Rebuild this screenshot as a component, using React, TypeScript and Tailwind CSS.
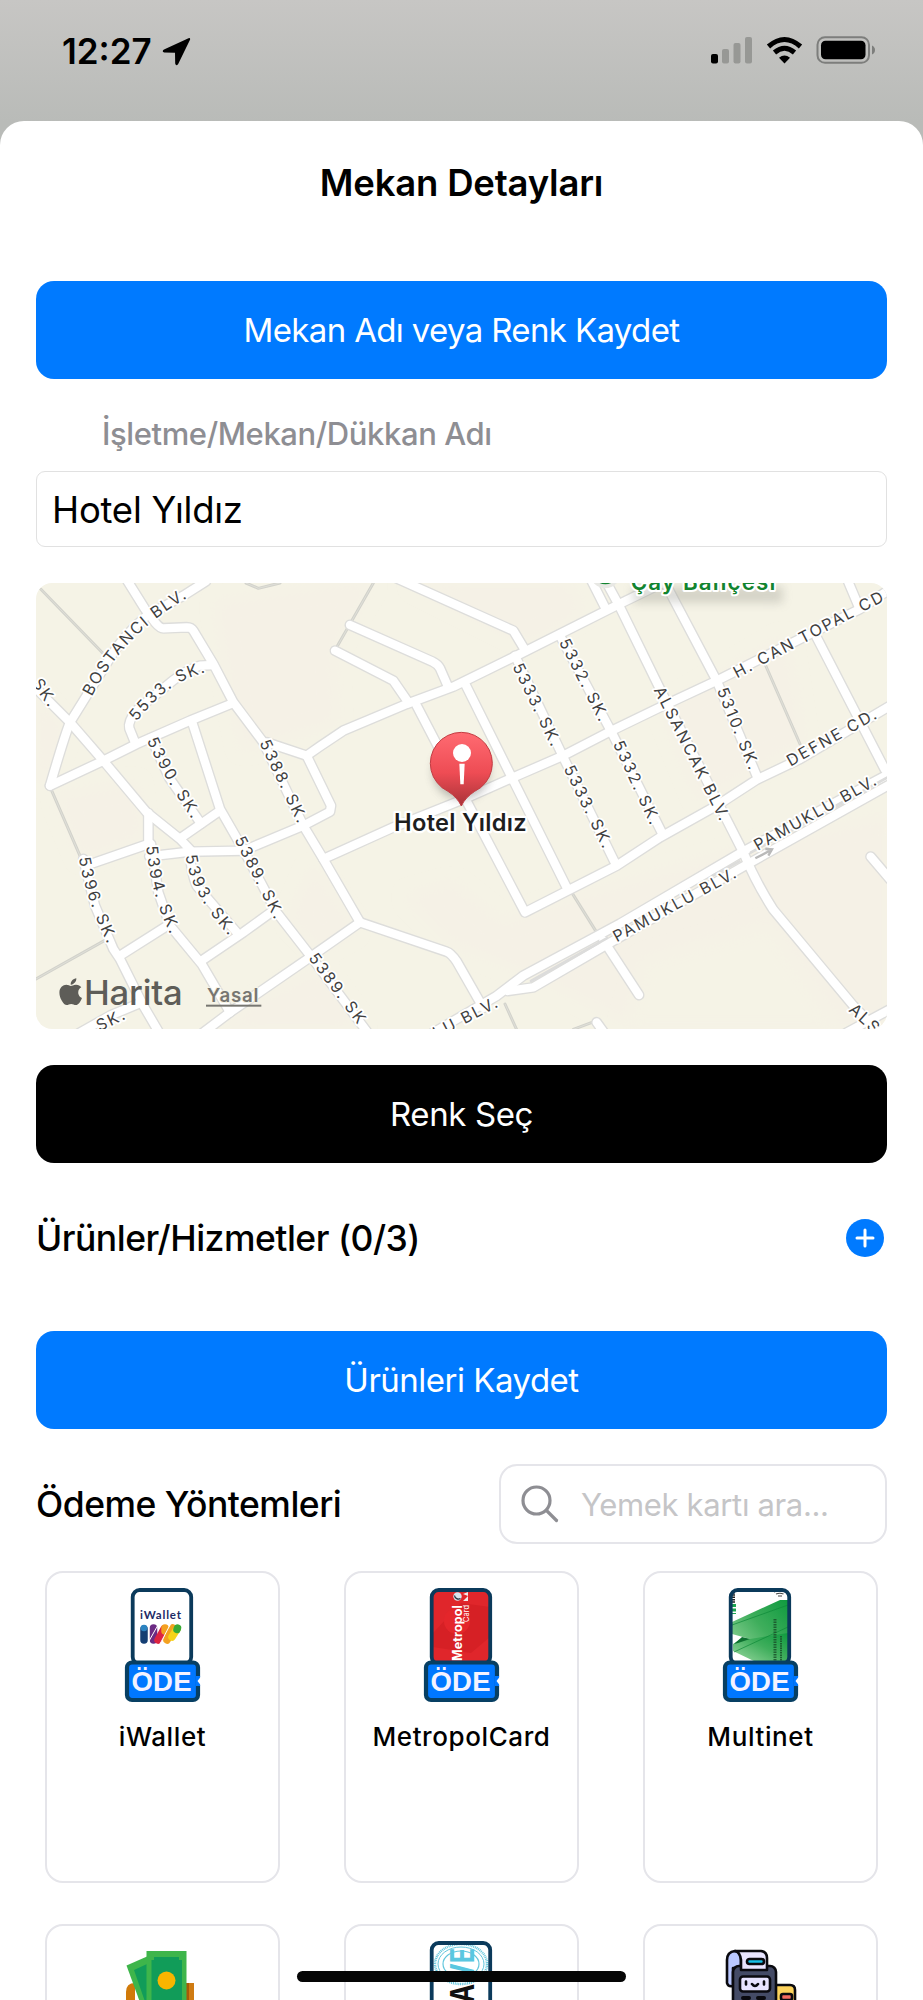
import { type FC, type ReactNode } from 'react';
import { FaApple } from 'react-icons/fa';

// street geometry, in thirds of a pixel from the map's top left corner
const roads = [
  'M272 -10L327 78L357 118Q372 136 382 136L452 133Q466 133 472 143L532 243L592 358L682 478L802 728L862 828L972 1018',
  'M972 1018L1232 1106Q1245 1110 1262 1135L1342 1275',
  'M972 1018L822 1123L582 1288L500 1350',
  'M510 -5L442 38L330 100Q260 160 225 220L102 418Q85 460 42 608',
  'M42 608L202 533L302 483L462 413L592 360',
  'M-18 298L102 418L202 533L332 688L432 768L472 810',
  'M297 478L280 436Q275 415 302 382L412 292Q450 262 492 248L532 246',
  'M345 465L400 585L495 722',
  'M437 763L552 683',
  'M467 413L552 678L622 800L722 988L827 1123L992 1345',
  'M150 848L337 783L337 690',
  'M340 820L462 806L622 803L802 728L882 686L885 668L812 518',
  'M692 478L812 518L852 490L922 443L1112 363L1252 311L1452 213L1752 62L1900 -10',
  'M862 828L1072 733L1292 645L1432 583L1582 518L1727 443L1882 368L2042 293L2292 168L2472 78L2560 20',
  'M142 828L177 968L232 1098L252 1128L322 1268L370 1350',
  'M252 1118L402 1023',
  'M345 783L367 928L402 1028L497 1143L582 1288',
  'M497 1133L622 1048L712 983',
  'M462 808Q465 870 482 908L602 1048',
  'M130 1350L222 1298L317 1258',
  'M1080 -15L1432 143L1468 203',
  'M942 126L1190 236Q1206 244 1212 256L1237 313',
  'M897 203L1072 293L1117 358',
  'M1142 368L1292 655L1467 988L1742 848L1872 763L2042 668L2162 590L2292 528L2560 370',
  'M1290 308L1592 913',
  'M1437 218L1582 523L1735 835',
  'M1572 158L1727 448L1877 748',
  'M1665 -10L1707 73',
  'M1707 -10L1752 73L1872 318L2122 808Q2160 900 2212 980L2452 1268L2540 1360',
  'M1882 -10L2042 293L2162 578',
  'M2432 -15L2467 68',
  'M2342 163L2547 560',
  'M1190 1350L1380 1240L1462 1178L1752 1022L2122 805L2560 572',
  'M1415 1224L1492 1213L1712 1085L2132 845L2560 605',
  'M1702 1072L1809 1236',
  'M2504 821L2580 910',
  'M2430 1350L2560 1280',
  'M1682 1318L1705 1350',
];

const paths =
  'M14 18L200 210M48 625L137 830M0 1188L205 1073M630 0L667 16L732 0M1012 0L902 193M1607 928L1682 1048M1407 1263L1442 1340M1612 1339L1682 1313M2187 243L2292 483';

const streets = [
  { name: 'BOSTANCI BLV.', d: 'M154 334Q222 200 335 108Q382 68 492 4' },
  { name: '5533. SK.', d: 'M290 407Q355 325 418 289Q467 259 560 240' },
  { name: '5390. SK.', d: 'M346 466Q385 560 510 745' },
  { name: '5388. SK.', d: 'M683 473L820 760' },
  { name: '5389. SK.', d: 'M608 763L750 1045' },
  { name: '5394. SK.', d: 'M346 788Q355 935 440 1095' },
  { name: '5393. SK.', d: 'M464 815Q475 930 615 1075' },
  { name: '5396. SK.', d: 'M143 822Q170 970 250 1120' },
  { name: 'SK.', d: 'M0 292L80 408' },
  { name: 'SK.', d: 'M184 1332L300 1277' },
  { name: '5389. SK', d: 'M828 1116L1015 1368' },
  { name: 'LU BLV.', d: 'M1195 1354L1450 1222' },
  { name: '5333. SK.', d: 'M1442 244L1586 540' },
  { name: '5333. SK.', d: 'M1596 550L1740 845' },
  { name: '5332. SK.', d: 'M1582 170L1730 464' },
  { name: '5332. SK.', d: 'M1744 476L1880 772' },
  { name: 'ALSANCAK BLV.', d: 'M1866 314L2094 765' },
  { name: '5310. SK.', d: 'M2056 316L2177 615' },
  { name: 'H. CAN TOPAL CD', d: 'M2096 273L2600 7' },
  { name: 'DEFNE CD.', d: 'M2256 538L2570 363' },
  { name: 'PAMUKLU BLV.', d: 'M1735 1065L2150 840' },
  { name: 'PAMUKLU BLV.', d: 'M2158 791L2580 556' },
  { name: 'ALS', d: 'M2446 1272L2560 1376' },
];

const StatusBar: FC = () => (
  <div className="flex h-[121px] items-start justify-between bg-linear-to-b from-[#c7c6c4] to-[#b9bbb8] pt-[30px] pr-[47px] pl-[62px]">
    <div className="flex items-center gap-[10px]">
      <span className="text-[35px] leading-[42px] font-semibold">12:27</span>
      <svg width="29" height="29" viewBox="0 0 29 29">
        <path d="M26.5 1.2L2 12.6Q-.6 14.5 2.2 15.6L13 15.8L13.2 26.5Q14 29.6 16.2 27L28 2.8Q28.6.5 26.5 1.2Z" />
      </svg>
    </div>
    <svg width="166" height="30" viewBox="0 0 166 30" className="mt-[5px]">
      <rect x="1" y="19" width="7" height="9.5" rx="2" />
      <g fill="#979895">
        <rect x="12" y="14" width="7" height="14.5" rx="2" />
        <rect x="23.5" y="8" width="7" height="20.5" rx="2" />
        <rect x="35" y="2" width="7" height="26.5" rx="2" />
      </g>
      <g fill="none" stroke="#000" strokeWidth="5">
        <path d="M58.5 11.5Q74.5 -2.5 90.5 11.5" />
        <path d="M64.5 17.5Q74.5 9 84.5 17.5" />
      </g>
      <path d="M69 22.8Q74.5 18.4 80 22.8L74.5 28.5Z" />
      <rect x="107.5" y="2.2" width="51.5" height="25.6" rx="7.5" fill="none" stroke="#7d7e7c" strokeWidth="2" />
      <rect x="111" y="5.8" width="44.5" height="18.5" rx="4.5" />
      <path d="M162 10.5Q165 12 165 15Q165 18 162 19.5Z" fill="#7d7e7c" />
    </svg>
  </div>
);

const Button: FC<{ className: string; children: ReactNode }> = ({ className, children }) => (
  <button className={`flex h-[98px] w-full items-center justify-center rounded-[18px] pt-[2px] text-[33px] text-white ${className}`}>
    {children}
  </button>
);

const PlaceMap: FC = () => (
  <div className="mt-[36px] h-[446px] w-full overflow-hidden rounded-[16px] bg-[#f5f3e6]">
    <svg width="851" height="446" viewBox="0 0 2553 1338">
      <defs>
        <linearGradient id="pin" x1="0" y1="0" x2="0" y2="1">
          <stop offset="0" stopColor="#ff6b72" />
          <stop offset=".55" stopColor="#ee4c54" />
          <stop offset="1" stopColor="#a83238" />
        </linearGradient>
        <filter id="soft" x="-50%" y="-50%" width="200%" height="200%">
          <feGaussianBlur stdDeviation="14" />
        </filter>
        <filter id="haze" x="-20%" y="-20%" width="140%" height="140%">
          <feGaussianBlur stdDeviation="22" />
        </filter>
      </defs>
      <g fill="#f5f1e6" filter="url(#haze)">
        <path d="M540 60L920 0L1010 0L890 200L900 420L620 500L570 250Z" />
        <path d="M1880 380L2250 160L2300 480L1990 650Z" />
        <path d="M1110 940L1250 900L1400 1020L1560 960L2120 800L2553 700V1338H1820L1500 1180L1250 1080Z" />
        <path d="M60 640L300 600L320 760L140 830Z" />
        <path d="M0 330L90 440L30 600L0 590Z" />
        <path d="M830 850L960 1040L850 1100L760 1010Z" />
        <path d="M640 1270L850 1160L980 1338H560Z" />
        <path d="M1120 0L1600 0L1640 90L1480 180Z" />
      </g>
      <path d="M1820 1130L2200 1020L2420 1338H1760Z" fill="#f5f3e6" filter="url(#haze)" />
      <g fill="none" strokeLinejoin="round" strokeLinecap="round">
        <path d={paths} stroke="#d2d2cb" strokeWidth="9" />
        <path d={paths} stroke="#dfdfd8" strokeWidth="3" />
        <g stroke="#dddddb" strokeWidth="33">
          {roads.map((d) => (
            <path key={d} d={d} />
          ))}
        </g>
        <g stroke="#fff" strokeWidth="25">
          {roads.map((d) => (
            <path key={d} d={d} />
          ))}
        </g>
        <path d="M1485 1194L1712 1066M2030 878L2110 835M2145 808L2553 584" stroke="#dcdcdb" strokeWidth="8" />
      </g>
      <path d="M2158 826L2204 802M2188 798L2208 799L2197 818" fill="none" stroke="#b9b9b9" strokeWidth="7" />
      <g fontSize="48" letterSpacing="6" fill="#3f3f3f" stroke="#fff" strokeWidth="11" strokeLinejoin="round" paintOrder="stroke">
        {streets.map((street, i) => (
          <g key={i}>
            <path id={`street-${i}`} d={street.d} fill="none" stroke="none" />
            <text dy="15">
              <textPath href={`#street-${i}`}>{street.name}</textPath>
            </text>
          </g>
        ))}
      </g>
      <rect x="1790" y="10" width="450" height="50" fill="#9a9a90" opacity=".35" filter="url(#soft)" />
      <circle cx="1708" cy="-30" r="46" fill="#e8e8e4" />
      <circle cx="1708" cy="-34" r="38" fill="#12842f" />
      <text x="1784" y="20" textLength="434" fontSize="67" fontWeight="600" fill="#12842f" stroke="#fff" strokeWidth="12" strokeLinejoin="round" paintOrder="stroke">
        Çay Bahçesi
      </text>
      <ellipse cx="1276" cy="566" rx="84" ry="82" fill="#555" opacity=".4" filter="url(#soft)" />
      <path d="M1276 669Q1264 643 1236 625A93 93 0 1 1 1316 625Q1288 643 1276 669Z" fill="url(#pin)" stroke="#c23b42" strokeWidth="3" />
      <circle cx="1278" cy="510" r="27" fill="#fff" />
      <path d="M1270 542H1286L1283 604H1273Z" fill="#fff" />
      <text x="1074" y="744" textLength="398" fontSize="71" fontWeight="600" fill="#1e1e1e" stroke="#fff" strokeWidth="14" strokeLinejoin="round" paintOrder="stroke">
        Hotel Yıldız
      </text>
      <g fill="#5e5d58">
        <FaApple x="58" y="1180" size={92} color="#5e5d58" />
        <text x="144" y="1266" textLength="296" fontSize="104" fontWeight="500">
          Harita
        </text>
        <text x="513" y="1258" textLength="154" fontSize="56" fontWeight="600" fill="#777671" stroke="#f5f3e6" strokeWidth="6" paintOrder="stroke">
          Yasal
        </text>
        <rect x="510" y="1265" width="166" height="6" fill="#777671" />
      </g>
    </svg>
  </div>
);

const CardFrame: FC<{ children?: ReactNode; face?: string }> = ({ children, face = '#fff' }) => (
  <svg width="80" height="118" viewBox="0 0 80 118" className="ml-[3px] block">
    <rect x="9" y="3.5" width="58" height="74" rx="6" fill={face} />
    {children}
    <rect x="8.7" y="3" width="58.5" height="74" rx="7" fill="none" stroke="#0b3a5b" strokeWidth="3.8" />
    <rect x="3" y="75.5" width="71" height="37.5" rx="5" fill="#0077ff" stroke="#073f63" strokeWidth="4.2" />
    <path d="M74 89V99" stroke="#0077ff" strokeWidth="4.2" />
    <path d="M77 89.5L73.5 94L77 98.5Z" fill="#fff" />
    <text x="7.5" y="103.7" textLength="60" fontSize="27.5" fontWeight="700" fill="#f4f3ff" className="font-['Liberation_Sans',Arial,sans-serif]">
      ÖDE
    </text>
  </svg>
);

const WalletArt: FC = () => (
  <CardFrame>
    <text x="16" y="31.5" textLength="41" fontSize="11.5" fontWeight="700" fill="#1c2a66" className="font-[Lato,sans-serif]">
      iWallet
    </text>
    <g strokeWidth="7.5" strokeLinecap="round">
      <path d="M20 42V53" stroke="#143e73" />
      <path d="M29.5 41V53" stroke="#6b2a83" />
      <path d="M34 53L40 42" stroke="#dd2340" />
      <path d="M41 41V44" stroke="#f3a120" />
      <path d="M43 53L49 41" stroke="#f3a120" />
      <path d="M48 50L53 42" stroke="#f7d417" />
      <path d="M53.5 41L53 42.5" stroke="#3aaa35" />
      <path d="M25 54L34 38M36.5 56L46 38" stroke="#fff" strokeWidth="1" />
    </g>
    <circle cx="20" cy="41" r="3.3" fill="#2b83c0" />
  </CardFrame>
);

const MetropolArt: FC = () => (
  <CardFrame face="#e0262b">
    <path d="M10 46L38 16L67 20V50L48 66L10 60Z" fill="#cf1d22" opacity=".6" />
    <circle cx="34" cy="34" r="13" fill="#e4262b" />
    <g transform="rotate(-90)" fill="#fff" className="font-[Inter,sans-serif]">
      <text x="-74" y="39" textLength="56" fontSize="12.5" fontWeight="700">Metropol</text>
      <text x="-35" y="45.500" textLength="17" fontSize="7.5">Card</text>
    </g>
    <circle cx="34.5" cy="9.5" r="4.2" fill="#dbe4ee" />
    <path d="M31.500 8.500A4 4 0 0 0 37.500 11.500" fill="none" stroke="#27313f" strokeWidth="1.300" />
    <path d="M40 14L45 9V14ZM40 7L45 5V9Z" fill="#f3eaea" />
  </CardFrame>
);

const MultinetArt: FC = () => (
  <CardFrame>
    <defs>
      <linearGradient id="leaf" x1="0" y1="1" x2="1" y2="0">
        <stop offset="0" stopColor="#a0dba5" />
        <stop offset=".55" stopColor="#3fae5c" />
        <stop offset="1" stopColor="#0f9a3f" />
      </linearGradient>
    </defs>
    <path d="M10 35L58 13L66 13V76L28 52L10 47Z" fill="url(#leaf)" />
    <path d="M11 57L20 51L28 52L66 46V76H36L11 64Z" fill="url(#leaf)" />
    <path d="M12 57L20 50L28 52L16 56Z" fill="#0d7030" />
    <path d="M10 38L66 18M12 65L66 40" stroke="#0f8a3a" strokeWidth=".7" fill="none" />
    <path d="M12 17V27" stroke="#1ba650" strokeWidth="4" strokeDasharray="3 1.5" />
    <path d="M11.5 5V16" stroke="#222" strokeWidth="3" strokeDasharray="1.5 .8" />
    <path d="M52 5Q57.5 2.5 63 5M54 7Q58 5.5 61.5 7M56 9H60" stroke="#444" strokeWidth="1.2" fill="none" />
    <path d="M53 32V76" stroke="#184d28" strokeWidth="3" strokeDasharray="1.5 1" opacity=".8" />
    <path d="M59 49V76" stroke="#184d28" strokeWidth="2" strokeDasharray="1.5 .8" opacity=".8" />
  </CardFrame>
);

const CashArt: FC = () => (
  <svg width="80" height="76" viewBox="0 -16 80 76" className="ml-[1px]">
    <path d="M3 36Q3 27 12 27V60H3Z" fill="#d17a09" />
    <path d="M63 27H71V60H63Z" fill="#cf7b12" />
    <path d="M62 27H66V60H62Z" fill="#a85a08" />
    <path d="M3.5 9.5L24 .5V60H22Z" fill="#3eb54b" />
    <path d="M11 14L24 8V60H27Z" fill="#119c59" />
    <path d="M23.5 -5H63.5V60H23.5Z" fill="#3eb54b" />
    <path d="M31 1H56V4H59V60H28.5V4H31Z" fill="#119c59" />
    <circle cx="43.5" cy="24.5" r="9" fill="#f8b500" />
  </svg>
);

const PaveArt: FC = () => (
  <CardFrame>
    <g fill="none" stroke="#62c6dc">
      <ellipse cx="38" cy="24" rx="26" ry="20" strokeWidth="2.5" strokeDasharray="1 .8" />
      <ellipse cx="38" cy="24" rx="23" ry="17" strokeWidth="1" />
      <ellipse cx="38" cy="24" rx="18" ry="13" strokeWidth="1.2" />
    </g>
    <g transform="rotate(-90)" fontWeight="700" className="font-[Inter,sans-serif]">
      <text x="-42" y="51" textLength="34" lengthAdjust="spacingAndGlyphs" fontSize="32" fill="#5ac7e0">VE</text>
      <text x="-63" y="51" textLength="19" lengthAdjust="spacingAndGlyphs" fontSize="32" fill="#111">A</text>
    </g>
  </CardFrame>
);

const TerminalArt: FC = () => (
  <svg width="80" height="76" viewBox="0 -16 80 76" stroke="#0a0a0f" strokeWidth="2.6" strokeLinejoin="round" strokeLinecap="round">
    <path d="M52 29H69Q74 29 74 34V62H52Z" fill="#fdd35c" />
    <rect x="60" y="38" width="11" height="6" rx="2" fill="#f4695f" />
    <path d="M14 -5Q6 -4 6 4V27Q7 31 12 30V12H20V2Q19 -5 14 -5Z" fill="#b9c7ff" />
    <rect x="12" y="10" width="43" height="56" rx="6" fill="#444b66" />
    <path d="M14 -5H40Q46 -4 46 2V14H20V4Q19 -4 14 -5Z" fill="#e8e4ff" />
    <rect x="26" y="3" width="17" height="5" rx="2.5" fill="#15bfe6" />
    <rect x="19" y="20.5" width="30" height="15" rx="3" fill="#e8e4ff" />
    <path d="M25 25.5V28.5M43 25.5V28.5M31 28Q34 32 37 28" fill="none" />
    <path d="M22 42H28M37 42H43" strokeWidth="4" />
  </svg>
);

const methods = [
  { name: 'iWallet', art: <WalletArt /> },
  { name: 'MetropolCard', art: <MetropolArt /> },
  { name: 'Multinet', art: <MultinetArt /> },
  { name: '', art: <CashArt /> },
  { name: '', art: <PaveArt /> },
  { name: '', art: <TerminalArt /> },
];

const App: FC = () => (
  <div className="relative h-[2000px] w-[923px] overflow-hidden bg-[#b9bbb8] font-[Inter,'Noto_Sans',sans-serif] text-black">
    <StatusBar />
    <main className="h-[1879px] rounded-t-[24px] bg-white px-[36px]">
      <h1 className="h-[160px] pt-[40px] text-center text-[36.5px] leading-[44px] font-semibold tracking-[-0.2px]">
        Mekan Detayları
      </h1>

      <Button className="bg-[#007aff] tracking-[-0.65px]">Mekan Adı veya Renk Kaydet</Button>
      <div className="mt-[35px] pl-[66px] text-[31px] leading-[40px] font-medium tracking-[-0.4px] text-[#8e8e93]">
        İşletme/Mekan/Dükkan Adı
      </div>
      <input
        className="mt-[17px] block h-[76px] w-full rounded-[9px] border-[1.5px] border-[#e1e1e1] pt-[2px] pl-[15px] text-[36.5px] tracking-[-0.25px]"
        defaultValue="Hotel Yıldız"
      />

      <PlaceMap />

      <div className="mt-[36px]">
        <Button className="bg-black tracking-[-0.4px]">Renk Seç</Button>
      </div>
      <div className="flex h-[168px] items-center justify-between pr-[3px] pb-[18px]">
        <h2 className="pt-[2px] text-[35.5px] font-medium tracking-[-0.5px]">Ürünler/Hizmetler (0/3)</h2>
        <svg width="38" height="38" viewBox="0 0 38 38">
          <circle cx="19" cy="19" r="19" fill="#007aff" />
          <path d="M19 11V27M11 19H27" stroke="#fff" strokeWidth="3" strokeLinecap="round" />
        </svg>
      </div>
      <Button className="bg-[#007aff] tracking-[-0.5px]">Ürünleri Kaydet</Button>

      <div className="mt-[35px] flex items-center justify-between">
        <h2 className="pt-[2px] text-[35.5px] font-medium tracking-[-0.5px]">Ödeme Yöntemleri</h2>
        <div className="flex h-[80px] w-[388px] items-center rounded-[18px] border-2 border-[#e5e5ea] pl-[20px]">
          <svg width="38" height="38" viewBox="0 0 38 38" fill="none" stroke="#8e8e93" strokeWidth="3.2" strokeLinecap="round">
            <circle cx="15.5" cy="15.5" r="13.5" />
            <path d="M25.5 25.5L35.5 35.5" />
          </svg>
          <span className="pt-[2px] pl-[22px] text-[31px] tracking-[-0.35px] text-[#c5c5c7]">Yemek kartı ara...</span>
        </div>
      </div>

      <div className="mt-[27px] grid grid-cols-3 gap-x-[64px] gap-y-[41px] px-[9px]">
        {methods.map((method, i) => (
          <div key={i} className="flex h-[312px] flex-col items-center rounded-[18px] border-2 border-[#e5e5ea] pt-[14px]">
            {method.art}
            <span className="mt-[12px] text-[26px] leading-[40px] font-medium tracking-[0.6px] whitespace-nowrap">{method.name}</span>
          </div>
        ))}
      </div>
    </main>
    <div className="absolute top-[1971px] left-[297px] h-[11px] w-[329px] rounded-full bg-[#050505]" />
  </div>
);

export default App;
